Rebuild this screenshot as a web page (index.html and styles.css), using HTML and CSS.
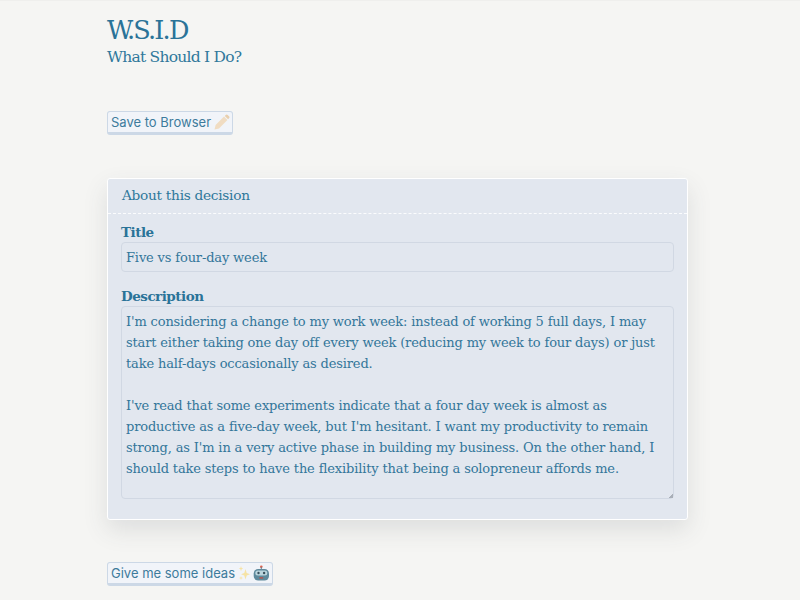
FILE: index.html
```html
<!DOCTYPE html>
<html lang="en">
<head>
<meta charset="utf-8">
<title>W.S.I.D</title>
<link rel="stylesheet" href="styles.css">
</head>
<body>
<main class="page">
  <header class="masthead">
    <h1 class="brand">W.S.I.D</h1>
    <p class="tagline">What Should I Do?</p>
  </header>
  <button class="btn btn-save" type="button">Save to Browser
    <svg class="icon" viewBox="0 0 16 16" width="16" height="16" aria-hidden="true">
      <path d="M.5 15.500 1.600 11 10 2.600 13.400 6 5 14.400Z" fill="#f0dcc2"/>
      <path d="M10.800 1.900 11.700 1a1.400 1.400 0 0 1 2 0l1.300 1.300a1.400 1.400 0 0 1 0 2l-.9.9Z" fill="#e8cfae"/>
    </svg>
  </button>
  <section class="card">
    <h2 class="card-head">About this decision</h2>
    <div class="card-body">
      <label class="field-label" for="title">Title</label>
      <input class="control" id="title" type="text" value="Five vs four-day week">
      <label class="field-label label-desc" for="desc">Description</label>
      <textarea class="control area" id="desc" spellcheck="false">I'm considering a change to my work week: instead of working 5 full days, I may
start either taking one day off every week (reducing my week to four days) or just
take half-days occasionally as desired.

I've read that some experiments indicate that a four day week is almost as
productive as a five-day week, but I'm hesitant. I want my productivity to remain
strong, as I'm in a very active phase in building my business. On the other hand, I
should take steps to have the flexibility that being a solopreneur affords me.</textarea>
    </div>
  </section>
  <button class="btn btn-ideas" type="button">Give me some ideas
    <svg class="icon" viewBox="0 0 32 16" width="32" height="16" aria-hidden="true">
      <path d="M7.500 4 8.700 8 12 9.200 8.700 10.400 7.500 14.500 6.300 10.400 3 9.200 6.300 8Z" fill="#f6e3a4"/>
      <path d="M3 1 3.600 3 5.200 3.600 3.600 4.200 3 6.200 2.400 4.200.8 3.600 2.400 3Z" fill="#f6e3a4"/>
      <path d="M3 11 3.500 12.500 5 13 3.500 13.500 3 15 2.500 13.500 1 13 2.500 12.500Z" fill="#f6e3a4"/>
      <circle cx="23.300" cy="1.800" r="1.300" fill="#d9624f"/>
      <rect x="22.800" y="2" width="1" height="2.500" fill="#6b7f8a"/>
      <rect x="15.700" y="4" width="15.300" height="11.500" rx="4.500" fill="#5f8a9c"/>
      <rect x="17.300" y="5.500" width="12" height="5" rx="2.500" fill="#bcd6de"/>
      <circle cx="20.500" cy="8" r="1.200" fill="#37505c"/>
      <circle cx="26.100" cy="8" r="1.200" fill="#37505c"/>
      <rect x="21.300" y="12" width="4" height="1.800" rx=".6" fill="#a85b58"/>
    </svg>
  </button>
</main>
</body>
</html>
```
FILE: styles.css
```css
* { box-sizing: border-box; }
html, body { margin: 0; padding: 0; }
body {
  background: #f5f5f3;
  border-top: 1px solid #efefed;
  color: #2a7398;
  font-family: "DejaVu Serif", serif;
  height: 600px;
  overflow: hidden;
}
.page { padding: 14px 112px 0 107px; }
.masthead { height: 96px; }
.brand {
  margin: 0;
  font-size: 25.500px;
  line-height: 30px;
  font-weight: 400;
  letter-spacing: -1.800px;
}
.tagline {
  margin: 0;
  font-size: 15.500px;
  line-height: 24px;
  letter-spacing: -0.750px;
  color: #2f789b;
}
.btn {
  display: flex;
  align-items: center;
  gap: 3px;
  height: 24px;
  padding: 0 3px;
  background: #f1f4f9;
  border: 1px solid #ccd8e6;
  border-bottom: 3px solid #ccd8e6;
  border-radius: 3px;
  color: #3d7b9c;
  font-family: Inter, "Liberation Sans", sans-serif;
  font-size: 13px;
  line-height: 16px;
  white-space: nowrap;
}
.btn-save { margin-bottom: 43px; width: 126px; }
.btn-ideas { width: 166px; margin-top: 42px; }
.icon { flex: none; }
.card {
  background: #e2e7ef;
  border: 1px solid #fff;
  border-radius: 3px;
  box-shadow: 0 10px 25px rgba(60, 70, 80, 0.13);
  height: 342px;
}
.card-head {
  margin: 0;
  padding: 6px 14px 0;
  height: 35px;
  border-bottom: 1px dashed #fbfcfd;
  font-size: 13.700px;
  line-height: 21px;
  font-weight: 400;
  letter-spacing: -0.280px;
  color: #2f789b;
}
.card-body { padding: 8px 13px 0; }
.field-label {
  display: block;
  font-size: 13.500px;
  line-height: 20px;
  font-weight: 700;
  letter-spacing: -0.5px;
  color: #2a7398;
}
.label-desc { margin-top: 14px; }
.control {
  display: block;
  width: 553px;
  height: 30px;
  padding: 0 3px 0 4px;
  background: #e2e7ef;
  border: 1px solid #d1d8e3;
  border-radius: 4px;
  color: #33769a;
  font-family: "DejaVu Serif", serif;
  font-size: 13px;
  letter-spacing: -0.150px;
  outline: none;
}
.area {
  height: 193px;
  padding: 4px 3px 4px 4px;
  line-height: 21px;
  white-space: pre;
  overflow: hidden;
  resize: vertical;
}
.area::-webkit-resizer {
  background: linear-gradient(135deg, transparent 50%, #a9afb8 50%) right bottom / 5px 5px no-repeat;
}
```
